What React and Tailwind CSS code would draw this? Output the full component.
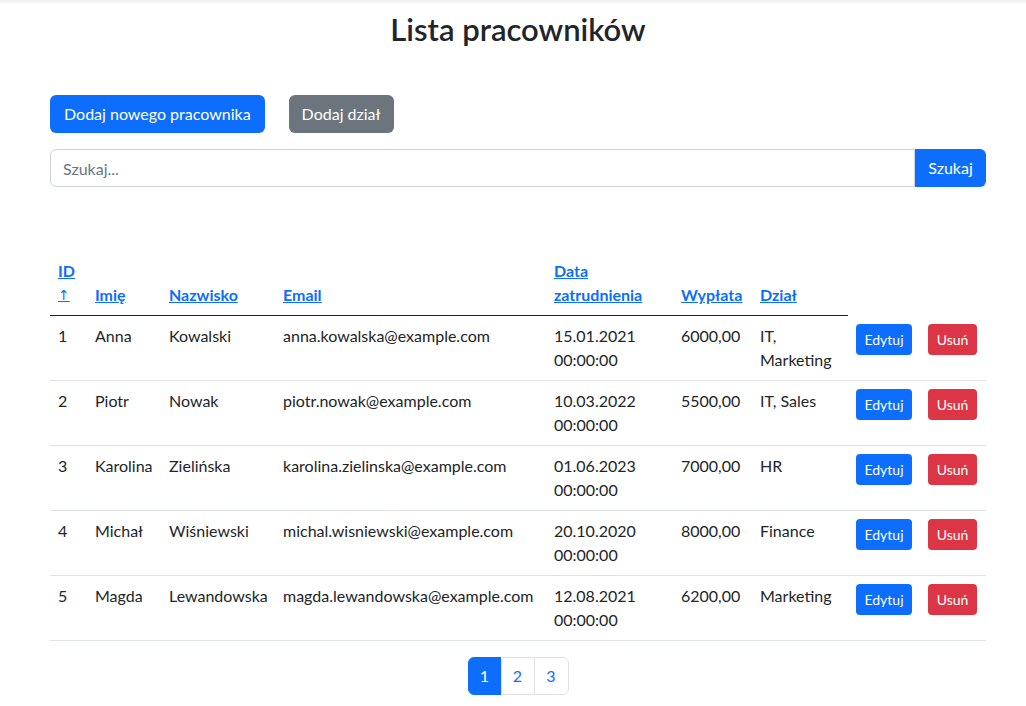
import React from "react";

const rows = [
  { id: 1, imie: "Anna", nazwisko: "Kowalski", email: "anna.kowalska@example.com", data: "15.01.2021 00:00:00", wyplata: "6000,00", dzial: "IT, Marketing" },
  { id: 2, imie: "Piotr", nazwisko: "Nowak", email: "piotr.nowak@example.com", data: "10.03.2022 00:00:00", wyplata: "5500,00", dzial: "IT, Sales" },
  { id: 3, imie: "Karolina", nazwisko: "Zielińska", email: "karolina.zielinska@example.com", data: "01.06.2023 00:00:00", wyplata: "7000,00", dzial: "HR" },
  { id: 4, imie: "Michał", nazwisko: "Wiśniewski", email: "michal.wisniewski@example.com", data: "20.10.2020 00:00:00", wyplata: "8000,00", dzial: "Finance" },
  { id: 5, imie: "Magda", nazwisko: "Lewandowska", email: "magda.lewandowska@example.com", data: "12.08.2021 00:00:00", wyplata: "6200,00", dzial: "Marketing" },
];

const th = "px-2 py-2 text-left align-bottom font-bold border-b border-[#212529]";
const link = "text-[#0d6efd] underline";
const td = "px-2 py-2 align-top border-b border-[#dee2e6]";

export default function App() {
  return (
    <div className="min-h-[706px] bg-white text-[#212529] text-[16px] leading-[24px]" style={{ fontFamily: 'Lato, "Noto Sans", sans-serif' }}>
      <div className="h-[5px] bg-gradient-to-b from-[#efefef] to-white" />
      <div className="ml-[50px] w-[936px]">
        <h1 className="mt-[5px] text-center text-[31px] leading-[38px] font-semibold">Lista pracowników</h1>

        <div className="mt-[47px] flex">
          <button className="h-[38px] px-[14px] rounded-[6px] bg-[#0d6efd] text-white">Dodaj nowego pracownika</button>
          <button className="ml-6 h-[38px] px-[13px] rounded-[6px] bg-[#6c757d] text-white">Dodaj dział</button>
        </div>

        <div className="mt-4 flex">
          <input
            className="flex-1 min-w-0 h-[38px] px-3 border border-[#ced4da] rounded-l-[6px] outline-none placeholder:text-[#6c757d]"
            placeholder="Szukaj..."
          />
          <button className="h-[38px] w-[71px] rounded-r-[6px] bg-[#0d6efd] text-white">Szukaj</button>
        </div>

        <table className="mt-16 w-full table-fixed border-collapse">
          <colgroup>
            <col className="w-[37px]" />
            <col className="w-[74px]" />
            <col className="w-[114px]" />
            <col className="w-[271px]" />
            <col className="w-[127px]" />
            <col className="w-[79px]" />
            <col className="w-[96px]" />
            <col className="w-[138px]" />
          </colgroup>
          <thead>
            <tr>
              <th className={th}>
                <a className={link}>
                  <span className="block h-[24px]">ID</span>
                  <span className="block h-[24px] font-normal text-[14px] leading-[24px]" style={{ fontFamily: '"DejaVu Sans", sans-serif' }}>↑</span>
                </a>
              </th>
              <th className={th}><a className={link}>Imię</a></th>
              <th className={th}><a className={link}>Nazwisko</a></th>
              <th className={th}><a className={link}>Email</a></th>
              <th className={th}><a className={link}>Data zatrudnienia</a></th>
              <th className={th}><a className={link}>Wypłata</a></th>
              <th className={th}><a className={link}>Dział</a></th>
              <th className="p-2" />
            </tr>
          </thead>
          <tbody>
            {rows.map((r) => (
              <tr key={r.id}>
                <td className={td}>{r.id}</td>
                <td className={td}>{r.imie}</td>
                <td className={td + " whitespace-nowrap"}>{r.nazwisko}</td>
                <td className={td + " whitespace-nowrap"}>{r.email}</td>
                <td className={td}>{r.data}</td>
                <td className={td}>{r.wyplata}</td>
                <td className={td}>{r.dzial}</td>
                <td className={td + " whitespace-nowrap"}>
                  <button className="h-[31px] w-[56px] rounded-[4px] bg-[#0d6efd] text-white text-[14px] leading-[21px]">Edytuj</button>
                  <button className="ml-4 h-[31px] w-[49px] rounded-[4px] bg-[#dc3545] text-white text-[14px] leading-[21px]">Usuń</button>
                </td>
              </tr>
            ))}
          </tbody>
        </table>

        <div className="mt-4 flex justify-center">
          <div className="flex">
            <span className="h-[38px] w-[34px] flex items-center justify-center rounded-l-[6px] bg-[#0d6efd] border border-[#0d6efd] text-white">1</span>
            <span className="h-[38px] w-[34px] -ml-px flex items-center justify-center border border-[#dee2e6] text-[#0d6efd]">2</span>
            <span className="h-[38px] w-[35px] -ml-px flex items-center justify-center rounded-r-[6px] border border-[#dee2e6] text-[#0d6efd]">3</span>
          </div>
        </div>
      </div>
    </div>
  );
}
